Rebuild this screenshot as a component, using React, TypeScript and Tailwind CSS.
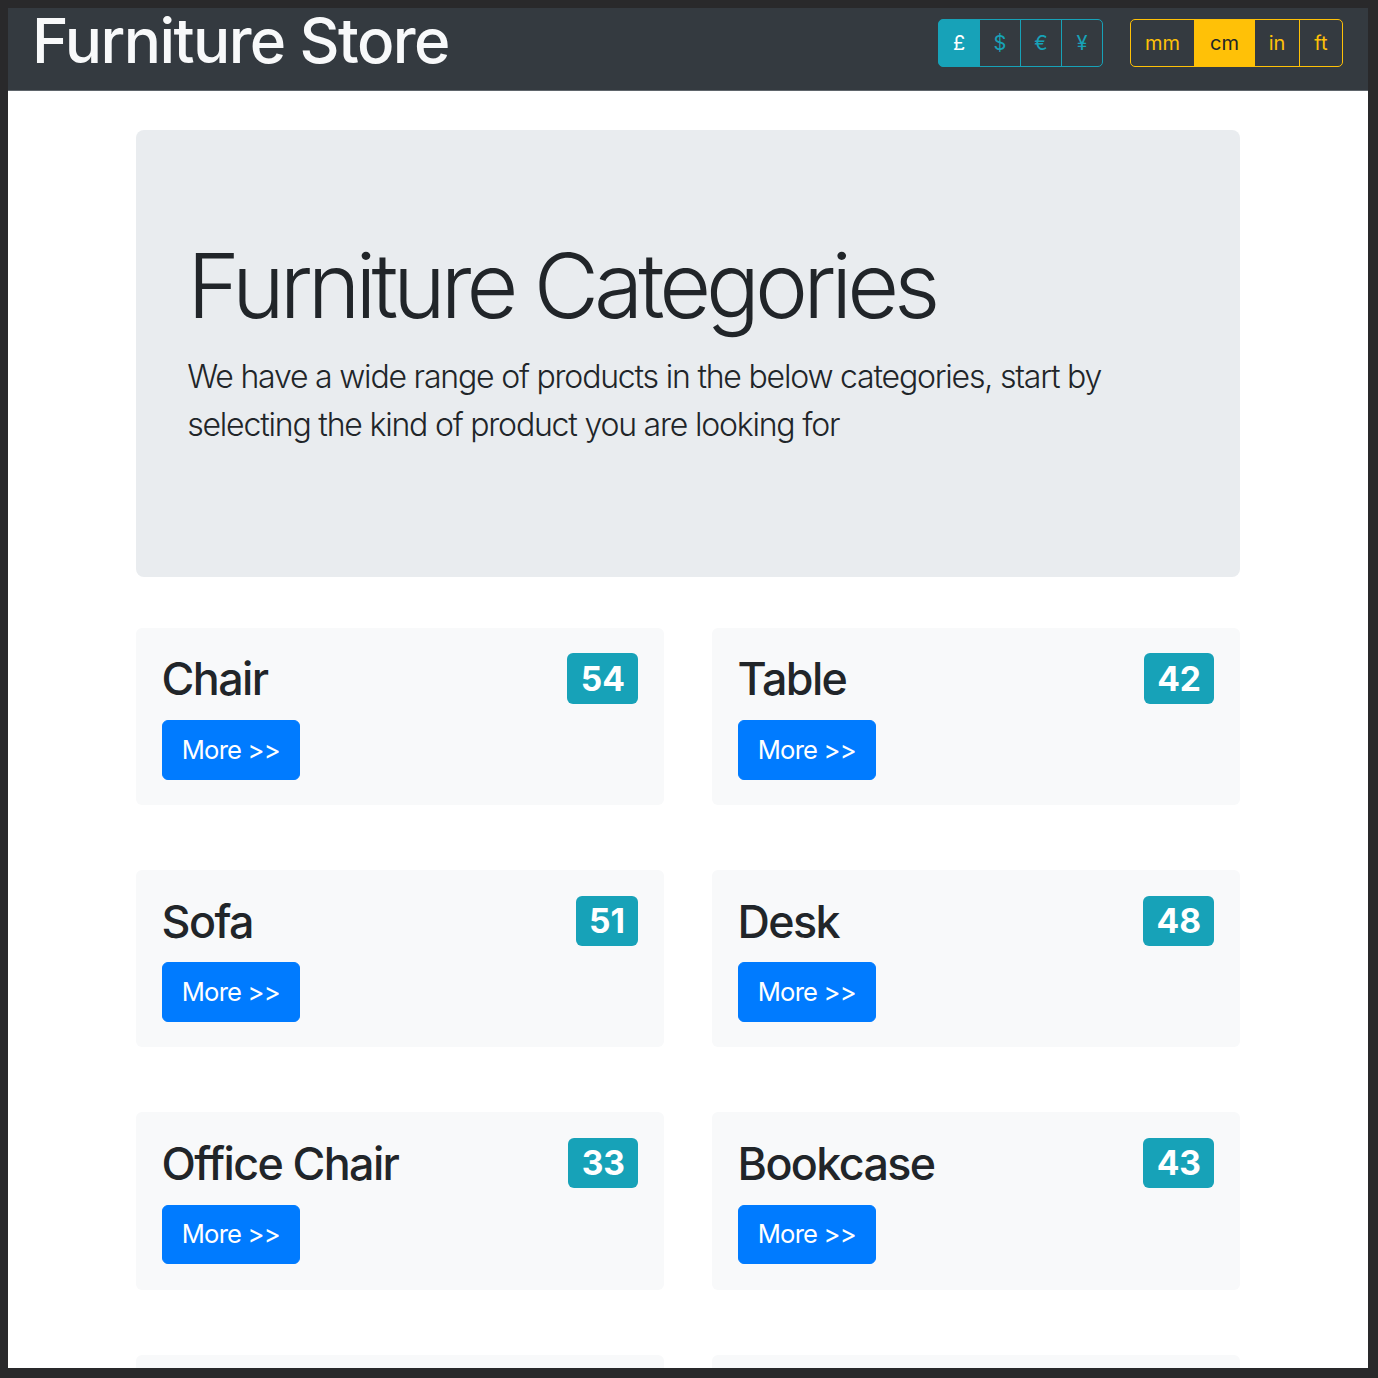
import { useState } from "react";

type Category = {
  name: string;
  count: number;
};

const categories: Category[] = [
  { name: "Chair", count: 54 },
  { name: "Table", count: 42 },
  { name: "Sofa", count: 51 },
  { name: "Desk", count: 48 },
  { name: "Office Chair", count: 33 },
  { name: "Bookcase", count: 43 },
  { name: "Bed", count: 29 },
  { name: "Wardrobe", count: 37 },
];

const currencies = ["£", "$", "€", "¥"];
const units = [
  { label: "mm", w: "w-[65px]" },
  { label: "cm", w: "w-[61px]" },
  { label: "in", w: "w-[46px]" },
  { label: "ft", w: "w-[44px]" },
];

const Header = () => {
  const [currency, setCurrency] = useState("£");
  const [unit, setUnit] = useState("cm");

  return (
    <header className="flex h-[83px] items-start justify-between border-b border-[#5f656b] bg-[#343a40] pl-[24px] pr-[25px]">
      <h1 className="text-[62px] font-medium leading-[66px] tracking-[-1.6px] text-[#f8f9fa]">Furniture Store</h1>
      <div className="mt-[11px] flex gap-[27px]">
        <div className="flex">
          {currencies.map((c, i) => {
            const active = c === currency;
            return (
              <button
                key={c}
                onClick={() => setCurrency(c)}
                className={
                  "h-[48px] w-[42px] border border-[#17a2b8] text-center text-[20px] leading-[30px] " +
                  (i > 0 ? "-ml-px " : "") +
                  (i === 0 ? "rounded-l-[5px] " : "") +
                  (i === currencies.length - 1 ? "rounded-r-[5px] " : "") +
                  (active ? "bg-[#17a2b8] text-white" : "text-[#17a2b8]")
                }
              >
                {c}
              </button>
            );
          })}
        </div>
        <div className="flex">
          {units.map((u, i) => {
            const active = u.label === unit;
            return (
              <button
                key={u.label}
                onClick={() => setUnit(u.label)}
                className={
                  "h-[48px] border border-[#ffc107] text-center text-[20px] leading-[30px] " +
                  u.w +
                  " " +
                  (i > 0 ? "-ml-px " : "") +
                  (i === 0 ? "rounded-l-[5px] " : "") +
                  (i === units.length - 1 ? "rounded-r-[5px] " : "") +
                  (active ? "bg-[#ffc107] text-[#212529]" : "text-[#ffc107]")
                }
              >
                {u.label}
              </button>
            );
          })}
        </div>
      </div>
    </header>
  );
};

const CategoryCard = ({ category }: { category: Category }) => (
  <div className="rounded-[6px] bg-[#f8f9fa] p-[25.6px]">
    <div className="mb-[12.8px] flex items-start justify-between">
      <h3 className="text-[44.8px] font-medium leading-[1.2] tracking-[-1.6px] text-[#212529]">{category.name}</h3>
      <span className="rounded-[6px] bg-[#17a2b8] px-[13.4px] py-[8.4px] text-[33.6px] font-bold leading-none text-white">
        {category.count}
      </span>
    </div>
    <button className="rounded-[6px] border-[1.6px] border-[#007bff] bg-[#007bff] px-[19.2px] py-[9.6px] text-[25.6px] leading-[1.5] tracking-[-0.8px] text-white">
      More &gt;&gt;
    </button>
  </div>
);

export default function App() {
  return (
    <div className="h-[1378px] w-[1378px] bg-[#29292b] pb-[10px] pl-[8px] pr-[10px] pt-[8px] font-['Inter',sans-serif]">
      <div className="h-[1360px] overflow-hidden bg-white">
        <Header />
        <main className="mx-auto w-[1104px] pt-[39px]">
          <section className="mb-[51.2px] rounded-[8px] bg-[#e9ecef] px-[51.2px] py-[102.4px] text-[#212529]">
            <h2 className="mb-[12.8px] text-[89.6px] font-light leading-[1.2] tracking-[-5px]">Furniture Categories</h2>
            <p className="mb-[25.6px] text-[32px] font-light leading-[48px] tracking-[-1.2px]">
              We have a wide range of products in the below categories, start by selecting the kind of product you are
              looking for
            </p>
          </section>
          <div className="grid grid-cols-2 gap-x-[48px] gap-y-[65px]">
            {categories.map((c) => (
              <CategoryCard key={c.name} category={c} />
            ))}
          </div>
        </main>
      </div>
    </div>
  );
}
